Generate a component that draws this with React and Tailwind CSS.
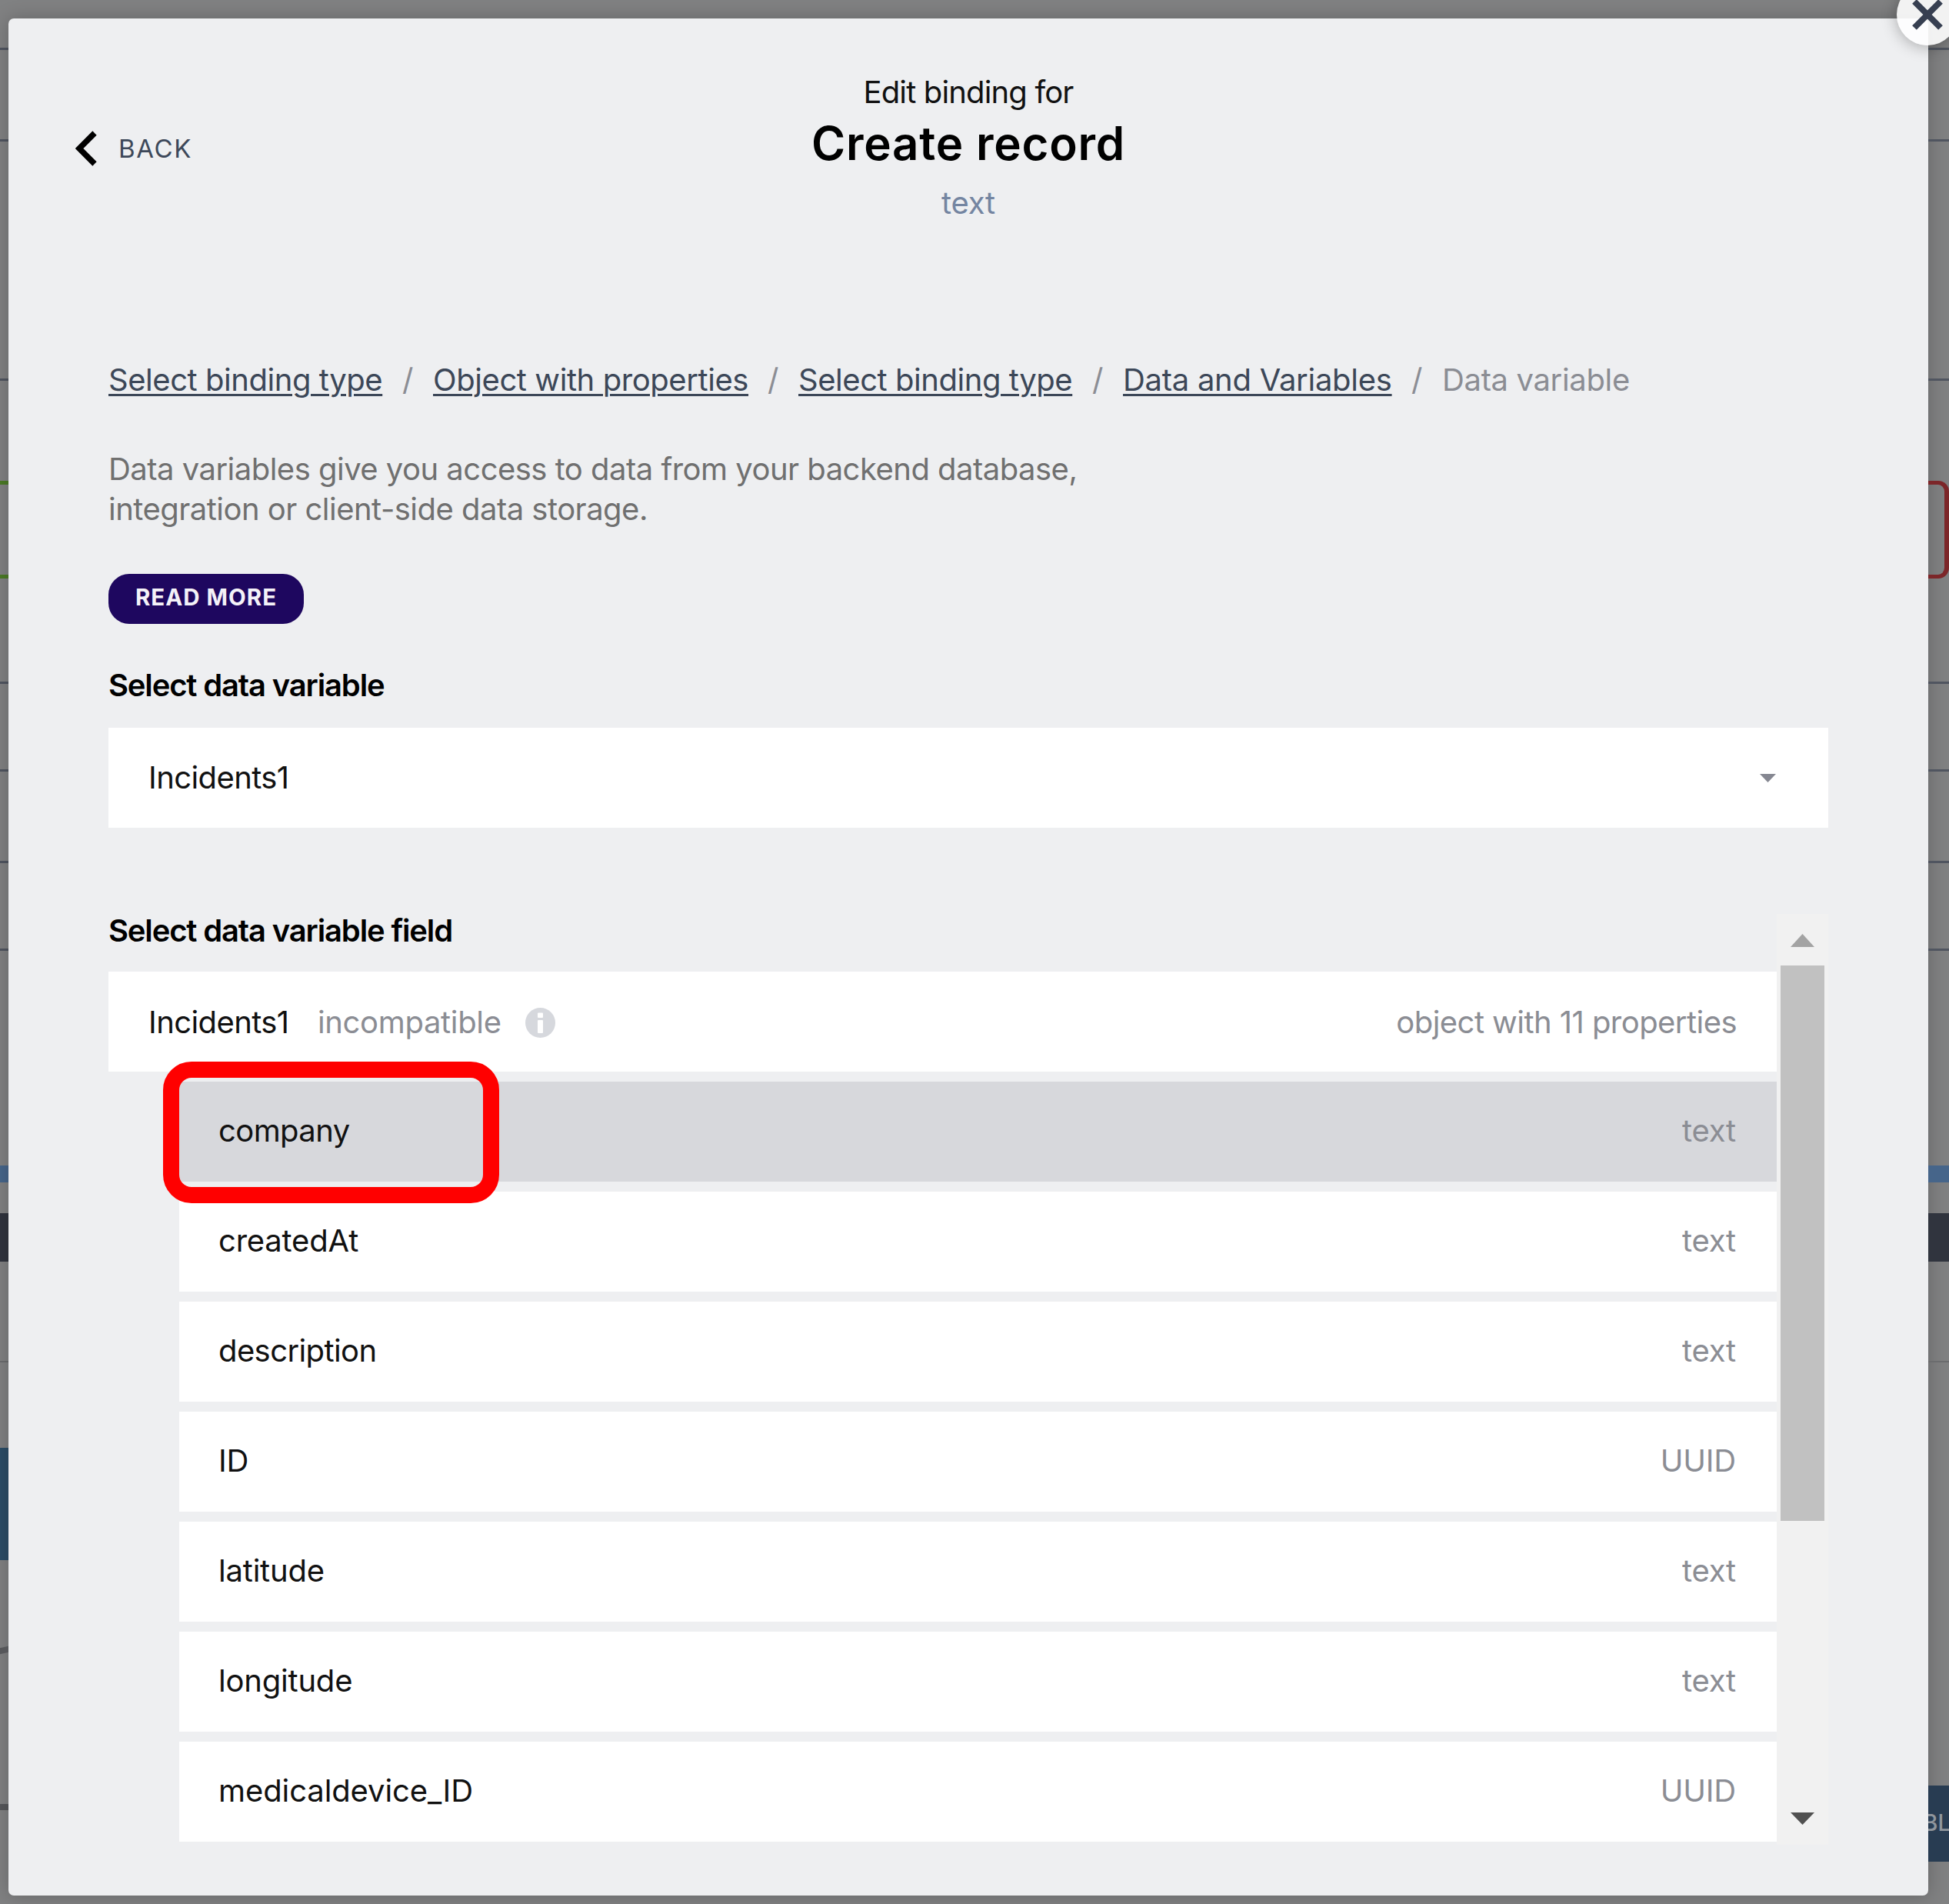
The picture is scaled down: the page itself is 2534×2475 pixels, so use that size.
const crumbs = [
  { label: "Select binding type", className: "w-[359px] tracking-[-0.45px]" },
  { label: "Object with properties", className: "w-[412px] tracking-[-0.42px]" },
  { label: "Select binding type", className: "w-[359px] tracking-[-0.45px]" },
  { label: "Data and Variables", className: "w-[352px] tracking-[-0.28px]" },
];

const fields = [
  { name: "company", type: "text", selected: true, className: "tracking-[-0.6px]" },
  { name: "createdAt", type: "text", className: "" },
  { name: "description", type: "text", className: "tracking-[-0.6px]" },
  { name: "ID", type: "UUID", className: "" },
  { name: "latitude", type: "text", className: "" },
  { name: "longitude", type: "text", className: "" },
  { name: "medicaldevice_ID", type: "UUID", className: "tracking-[-0.1px]" },
];

const Rule = () => <div className="h-[3px] shrink-0 bg-[#505560]" />;

/* The dimmed canvas that stays visible on the left of the dialog. */
function LeftGutter() {
  return (
    <div className="flex h-full w-[11px] shrink-0 flex-col">
      <div className="h-[62px]" />
      <Rule />
      <div className="h-[116px]" />
      <Rule />
      <div className="h-[308px]" />
      <Rule />
      <div className="h-[130px]" />
      <div className="h-[5px] bg-[#4b7a26]" />
      <div className="h-[117px]" />
      <div className="h-[5px] bg-[#4b7a26]" />
      <div className="h-[134px]" />
      <Rule />
      <div className="h-[111px]" />
      <Rule />
      <div className="h-[116px]" />
      <Rule />
      <div className="h-[111px]" />
      <Rule />
      <div className="h-[279px]" />
      <div className="h-[22px] bg-[#46658a]" />
      <div className="h-[40px]" />
      <div className="h-[63px] bg-[#30343e]" />
      <div className="h-[129px]" />
      <div className="h-[2px] bg-[#6b6c6e]" />
      <div className="h-[111px]" />
      <div className="h-[146px] bg-[#2b4c66]" />
      <div className="h-[113px]" />
      <div className="h-[8px] -skew-y-12 bg-[#56575a]" />
      <div className="h-[196px]" />
      <div className="h-[8px] bg-[#56575a]" />
    </div>
  );
}

/* The same canvas on the right of the dialog. */
function RightGutter() {
  return (
    <div className="flex h-full w-[27px] shrink-0 flex-col overflow-hidden">
      <div className="h-[62px]" />
      <Rule />
      <div className="h-[116px]" />
      <Rule />
      <div className="h-[308px]" />
      <Rule />
      <div className="h-[130px]" />
      <div className="h-[127px] rounded-r-[14px] border-y-[5px] border-r-[6px] border-[#7c2629]" />
      <div className="h-[134px]" />
      <Rule />
      <div className="h-[111px]" />
      <Rule />
      <div className="h-[116px]" />
      <Rule />
      <div className="h-[111px]" />
      <Rule />
      <div className="h-[279px]" />
      <div className="h-[22px] bg-[#46658a]" />
      <div className="h-[40px]" />
      <div className="h-[63px] bg-[#30343e]" />
      <div className="h-[129px]" />
      <div className="h-[2px] bg-[#6b6c6e]" />
      <div className="h-[550px]" />
      <div className="flex h-[99px] items-center justify-end bg-[#283c52] pb-[4px] text-[30px] leading-none font-medium text-[#8f959c]">
        <span className="-mr-[2px]">BL</span>
      </div>
    </div>
  );
}

function Header() {
  return (
    <header className="grid grid-cols-[1fr_auto_1fr] items-center">
      <button className="mt-[2px] flex items-center gap-[28px] pl-[87px]">
        <svg className="h-[46px] w-[28px]" viewBox="0 0 28 46" fill="none">
          <path d="M25 3 L5 23 L25 43" stroke="#000" strokeWidth="7.5" />
        </svg>
        <span className="text-[33px] leading-[40px] font-[380] tracking-[1.6px] text-[#3d4859]">BACK</span>
      </button>
      <div className="flex flex-col items-center text-center">
        <div className="leading-[52px] tracking-[-0.85px]">Edit binding for</div>
        <h1 className="mt-1 text-[60px] leading-[72px] font-[580] tracking-[0.8px] text-black">Create record</h1>
        <div className="mt-4 leading-[52px] text-[#7485a1]">text</div>
      </div>
    </header>
  );
}

function Breadcrumbs() {
  return (
    <nav className="mt-[178px] flex items-center leading-[52px] whitespace-nowrap text-[#8b8d94]">
      {crumbs.map((crumb, i) => (
        <div key={i} className="flex">
          <a className={`${crumb.className} text-[#3c4758] underline decoration-[3px] underline-offset-[4px]`}>
            {crumb.label}
          </a>
          <span className="w-[63px] pr-[3px] text-center">/</span>
        </div>
      ))}
      <span className="tracking-[-0.35px]">Data variable</span>
    </nav>
  );
}

const InfoIcon = () => (
  <svg className="ml-[33px] h-[39px] w-[39px]" viewBox="0 0 39 39">
    <circle cx="19.5" cy="19.5" r="19.5" fill="#d6d8dd" />
    <rect x="16" y="6.5" width="7" height="6.5" rx="1" fill="#fff" />
    <rect x="16" y="16" width="7" height="17" rx="1" fill="#fff" />
  </svg>
);

function FieldRow({ name, type, selected, className }) {
  return (
    <li
      className={`relative flex h-[130px] items-center justify-between pr-[53px] pb-[2px] pl-[51px] ${selected ? "z-10 bg-[#d7d8dc]" : "bg-white"}`}
    >
      <span className={className}>{name}</span>
      <span className="text-[#8b8d94]">{type}</span>
      {selected && (
        <span className="absolute -top-[26px] -left-[21px] h-[184px] w-[437px] rounded-[37px] border-[21px] border-[#ff0000]" />
      )}
    </li>
  );
}

function Scrollbar() {
  return (
    <div className="mt-1 flex h-[1210px] w-[67px] flex-col items-center bg-[#f1f1f1]">
      <svg className="mt-[26px] h-[17px] w-[31px]" viewBox="0 0 31 17">
        <path d="M15.5 0 L31 17 H0 Z" fill="#a3a3a3" />
      </svg>
      <div className="mt-[24px] h-[722px] w-[57px] bg-[#c1c1c1]" />
      <svg className="mt-[379px] h-[16px] w-[31px]" viewBox="0 0 31 16">
        <path d="M15.5 16 L31 0 H0 Z" fill="#505050" />
      </svg>
    </div>
  );
}

export default function App() {
  return (
    <div className="relative flex h-[2475px] w-[2534px] overflow-hidden bg-[#808182] font-['Inter',sans-serif] text-[40px] font-[380] tracking-[-0.2px] text-[#111]">
      <LeftGutter />
      <main className="mt-[24px] h-[2440px] w-[2496px] shrink-0 rounded-[7px] bg-[#eeeff1] pt-[70px] shadow-[0_0_24px_rgba(0,0,0,0.22)]">
        <Header />
        <div className="pl-[130px]">
          <Breadcrumbs />
          <p className="mt-[64px] leading-[52px] tracking-[-0.52px] whitespace-nowrap text-[#707070]">
            Data variables give you access to data from your backend database,
            <br />
            integration or client-side data storage.
          </p>
          <button className="mt-[58px] flex h-[65px] w-[254px] items-center justify-center rounded-[27px] bg-[#1e075f] pb-1 text-[29.5px] font-bold tracking-[1px] text-[#f4f2f8]">
            READ MORE
          </button>
          <h2 className="mt-[54px] leading-[52px] font-semibold tracking-[-1.15px] text-black">Select data variable</h2>
          <div className="mt-[29px] flex h-[130px] w-[2236px] items-center justify-between bg-white pr-[68px] pl-[52px]">
            <span className="tracking-[-0.6px]">Incidents1</span>
            <svg className="h-[11px] w-[21px]" viewBox="0 0 21 11">
              <path d="M0 0 H21 L10.500 11 Z" fill="#858791" />
            </svg>
          </div>
          <section className="mt-[108px] flex">
            <div className="w-[2169px]">
              <h2 className="leading-[52px] font-semibold tracking-[-1.15px] text-black">Select data variable field</h2>
              <div className="mt-[27px] flex h-[130px] items-center bg-white px-[52px] pt-[2px]">
                <span className="w-[183px] tracking-[-0.6px]">Incidents1</span>
                <span className="ml-[37px] w-[237px] tracking-[-0.35px] text-[#8b8d94]">incompatible</span>
                <InfoIcon />
                <span className="ml-auto tracking-[-0.55px] text-[#8b8d94]">object with 11 properties</span>
              </div>
              <ul className="mt-[13px] ml-[92px] flex flex-col gap-[13px]">
                {fields.map((field) => (
                  <FieldRow key={field.name} {...field} />
                ))}
              </ul>
            </div>
            <Scrollbar />
          </section>
        </div>
      </main>
      <RightGutter />
      <button className="absolute -top-[21px] left-[2466px] flex h-[80px] w-[80px] items-center justify-center rounded-full bg-white/90 shadow-[0_2px_20px_rgba(0,0,0,0.3)]">
        <svg className="h-[40px] w-[40px]" viewBox="0 0 40 40" fill="none">
          <path d="M3 3 L37 37 M37 3 L3 37" stroke="#373f51" strokeWidth="8" />
        </svg>
      </button>
    </div>
  );
}
